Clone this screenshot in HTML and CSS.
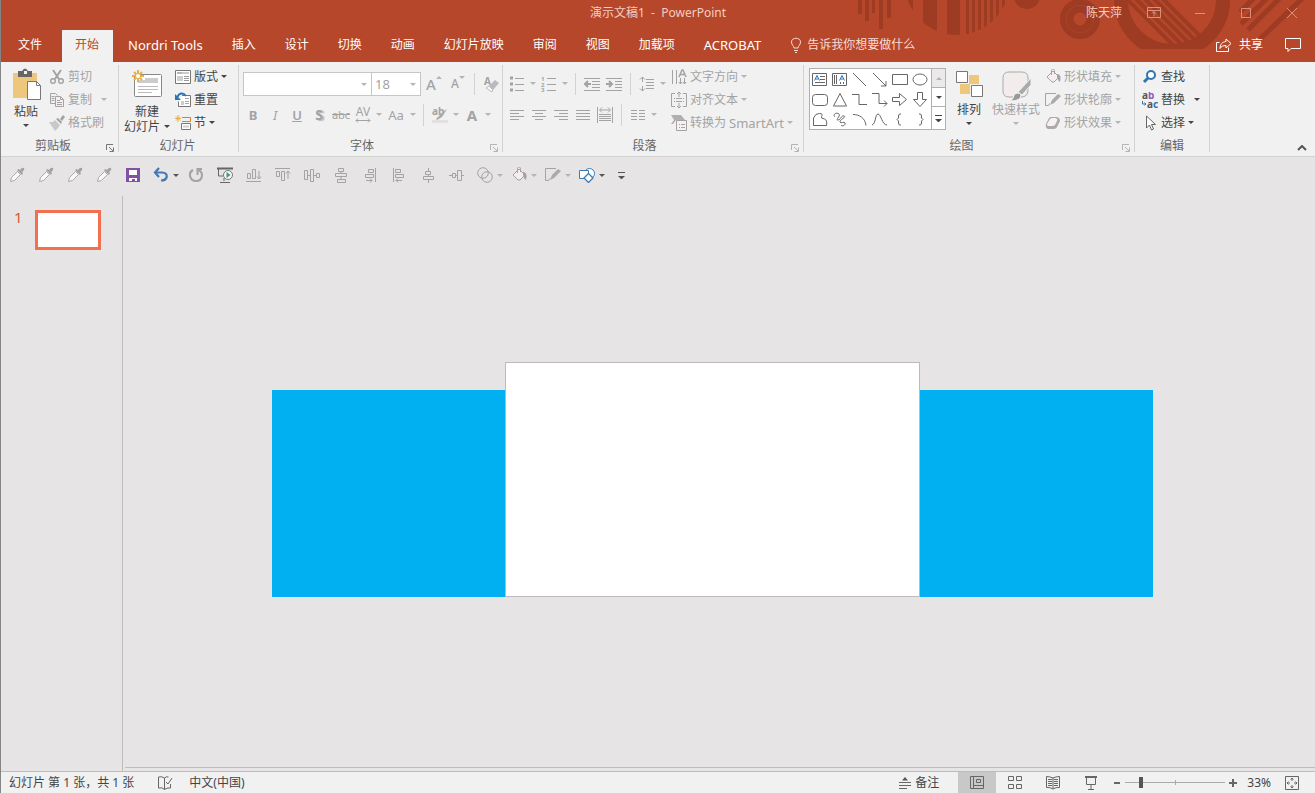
FILE: index.html
```html
<!DOCTYPE html>
<html lang="zh-CN">
  <head>
    <meta charset="UTF-8" />
    <meta name="viewport" content="width=device-width, initial-scale=1.0" />
    <title>演示文稿1 - PowerPoint</title>
    <link rel="stylesheet" href="styles.css">
  </head>
  <body>
    <!-- 图标定义 -->
    <svg class="defs" aria-hidden="true">
      <symbol id="i-cut" viewBox="0 0 16 16"><path d="M4 1l6 9M12 1L6 10" fill="none" stroke="currentColor" stroke-width="2"/><circle cx="4" cy="12" r="2.3" fill="none" stroke="currentColor" stroke-width="1.4"/><circle cx="12" cy="12" r="2.3" fill="none" stroke="currentColor" stroke-width="1.4"/></symbol>
      <symbol id="i-copy" viewBox="0 0 16 16"><path d="M6.500 11.500h-5v-10h5l2 2M2.500 4.500h3M2.500 6.500h3M2.500 8.500h3" fill="none" stroke="currentColor"/><path d="M6.500 4.500h5l3 3v7h-8zM11.500 4.500v3h3M8 8.500h3M8 10.500h5M8 12.500h5" fill="#f6eeee" stroke="currentColor"/></symbol>
      <symbol id="i-brush" viewBox="0 0 16 16"><path d="M0 7l4 0 2-2 5 5-2 3-3 3z" fill="#c8c8c8"/><path d="M7 4l2-1 4 4-1 2zM11 4l3-4 2 2-3 4z" fill="currentColor"/></symbol>
      <symbol id="i-layout" viewBox="0 0 16 16"><path d="M.5 1.500h15v13h-15z" fill="#fff" stroke="#777"/><path d="M2 3h5v2H2zM2 7h6v5H2z" fill="#cfcfcf"/><path d="M2 4h12M9 7.500h5M9 9.500h5M9 11.500h5" stroke="#999"/></symbol>
      <symbol id="i-reset" viewBox="0 0 16 16"><path d="M7 3.500h8.500v11h-12v-5" fill="#fff" stroke="#777"/><path d="M6 9h3v4H6z" fill="#ccc"/><path d="M10 6.500h4M10 9.500h4M10 11.500h4" stroke="#aaa"/><path d="M2.500 5C4 1 8 0 11 4" fill="none" stroke="#2e75b6" stroke-width="2"/><path d="M0 2v6h6z" fill="#2e75b6"/></symbol>
      <symbol id="i-section" viewBox="0 0 16 16"><path d="M7 2.500h8.500v4H7" fill="none" stroke="#e08024"/><path d="M6.500 8.500h9v6h-9z" fill="#fff" stroke="#777"/><path d="M8 11.500h6" stroke="#ccc" stroke-width="2"/><path d="M3 0v7M0 3.500h6M1 1.500l4 4M5 1.500l-4 4" stroke="#e8b04c"/></symbol>
      <symbol id="i-launch" viewBox="0 0 8 8"><path d="M.5 6V.5H7M3 3l4 4M7.500 3.500v4h-4" fill="none" stroke="currentColor"/></symbol>
      <symbol id="i-bullets" viewBox="0 0 16 16"><path d="M1 2h3M1 8h3M1 14h3" stroke="currentColor" stroke-width="3"/><path d="M6 2.500h9M6 8.500h9M6 14.500h9" stroke="currentColor"/></symbol>
      <symbol id="i-outdent" viewBox="0 0 16 16"><path d="M0 2.500h16M8 5.500h8M8 8.500h8M8 11.500h8M0 14.500h16" stroke="currentColor"/><path d="M1 8h6M4 5L1 8l3 3" fill="none" stroke="currentColor" stroke-width="2"/></symbol>
      <symbol id="i-indent" viewBox="0 0 16 16"><path d="M0 2.500h16M9 5.500h7M9 8.500h7M9 11.500h7M0 14.500h16" stroke="currentColor"/><path d="M0 8h6M3 5l3 3-3 3" fill="none" stroke="currentColor" stroke-width="2"/></symbol>
      <symbol id="i-spacing" viewBox="0 0 16 16"><path d="M3.500 1v5M1 3.500L3.500 1 6 3.500M3.500 15v-5M1 12.500L3.500 15 6 12.500" fill="none" stroke="currentColor"/><path d="M7 3.500h8M7 6.500h8M7 9.500h8M7 12.500h8" stroke="currentColor"/></symbol>
      <symbol id="i-left" viewBox="0 0 16 16"><path d="M1 3.500h14M1 6.500h9M1 9.500h14M1 12.500h9" stroke="currentColor"/></symbol>
      <symbol id="i-center" viewBox="0 0 16 16"><path d="M1 3.500h14M4 6.500h8M1 9.500h14M4 12.500h8" stroke="currentColor"/></symbol>
      <symbol id="i-right" viewBox="0 0 16 16"><path d="M1 3.500h14M6 6.500h9M1 9.500h14M6 12.500h9" stroke="currentColor"/></symbol>
      <symbol id="i-justify" viewBox="0 0 16 16"><path d="M1 3.500h14M1 6.500h14M1 9.500h14M1 12.500h14" stroke="currentColor"/></symbol>
      <symbol id="i-distribute" viewBox="0 0 16 16"><path d="M.5 0v16M15.500 0v16M2 7.500h12M2 9.500h12M2 11.500h12M2 13.500h12M3 3h10M5 .5L2.500 3 5 5.500M11 .5L13.500 3 11 5.500" fill="none" stroke="currentColor"/></symbol>
      <symbol id="i-columns" viewBox="0 0 16 16"><path d="M1 3.500h6M1 6.500h6M1 9.500h6M1 12.500h6M9 3.500h6M9 6.500h6M9 9.500h6M9 12.500h6" stroke="currentColor"/></symbol>
      <symbol id="i-direction" viewBox="0 0 16 16"><path d="M1.500 1v14M5.500 1v14M9.500 9v6M13.500 9v6M8 13l1.500 2 1.500-2M12 13l1.500 2 1.500-2" fill="none" stroke="currentColor"/><path d="M8 8l3-7h1l3 7M9 5.500h5" fill="none" stroke="currentColor" stroke-width="1.500"/></symbol>
      <symbol id="i-valign" viewBox="0 0 16 16"><path d="M4 1.500H.5v13H4M12 1.500h3.500v13H12" fill="none" stroke="currentColor"/><path d="M3 6.500h1M5 6.500h6M12 6.500h1M3 9.500h1M5 9.500h6M12 9.500h1" stroke="currentColor"/><path d="M8 5V0M6 2l2-2 2 2M8 11v5M6 14l2 2 2-2" fill="none" stroke="currentColor"/></symbol>
      <symbol id="i-smartart" viewBox="0 0 16 16"><path d="M0 0h10l4 5H5L2 9H0l3-4z" fill="#b0b0b0"/><path d="M5.500 5.500h10v10h-10z" fill="#f6f0f0" stroke="currentColor"/><path d="M8 9.500h1M10 9.500h4M8 12.500h1M10 12.500h4" stroke="currentColor"/></symbol>
      <symbol id="i-bucket" viewBox="0 0 16 16"><path d="M2 8l6-6 6 6-5 5-2 0z" fill="#f6eeee" stroke="currentColor"/><path d="M6.500 6V1.500c0-2 3-2 3 0V5" fill="none" stroke="currentColor"/><path d="M12 5c4 0 4 4 3 8-2-1-2-3-3-5z" fill="currentColor"/></symbol>
      <symbol id="i-outline" viewBox="0 0 16 16"><path d="M11 1.500H.5v12h3l1-2" fill="none" stroke="currentColor"/><path d="M5 13l2-5 6-6 3 2-7 7z" fill="#aaa"/></symbol>
      <symbol id="i-effect" viewBox="0 0 16 16"><path d="M1 9l3-6q1-1 2-1h6q3 1 3 4l-3 6q-1 2-3 2H3q-3-1-2-5z" fill="#aaa"/><path d="M2 9l3-5q1-1 2-1h4q2 1 1 3l-2 4q-1 1-2 1H3q-1 0-1-2z" fill="#f6f0f0"/></symbol>
      <symbol id="i-find" viewBox="0 0 16 16"><circle cx="9" cy="6" r="4" fill="#fff" stroke="#2e75b6" stroke-width="2"/><path d="M6 9l-4 4" stroke="#2e75b6" stroke-width="3"/></symbol>
      <symbol id="i-select" viewBox="0 0 16 16"><path d="M4.500 1v12l3-3 2 5 2-1-2-4.500h4z" fill="#fff" stroke="#666"/></symbol>
      <symbol id="i-dropper" viewBox="0 0 16 16"><path d="M1.500 14.500l1-4 6-6 3 3-6 6z" fill="#f8f8f8" stroke="#aaa"/><path d="M8 3l5 5 1-2-1-1q3-2 2-4-2-1-4 2L9.500 2z" fill="#a3a3a3"/></symbol>
      <symbol id="i-save" viewBox="0 0 16 16"><path d="M1 1h14v14H1z" fill="#8450a5"/><path d="M4 3h8v5H4zM4 11h8v3h-2v-2H7v2H4z" fill="#fff"/></symbol>
      <symbol id="i-undo" viewBox="0 0 16 16"><path d="M2 5.500h7c7 0 6 8-1 8" fill="none" stroke="#3f7ab5" stroke-width="2.200"/><path d="M6 1L2 5.500 6 10" fill="none" stroke="#3f7ab5" stroke-width="2.200"/></symbol>
      <symbol id="i-redo" viewBox="0 0 16 16"><path d="M5 3C-.5 6 2 14 8 14c7 0 8-9 2-11" fill="none" stroke="currentColor" stroke-width="2"/><path d="M9.500 8V2H14" fill="none" stroke="currentColor" stroke-width="2"/></symbol>
      <symbol id="i-play" viewBox="0 0 16 16"><path d="M0 1.500h16" stroke="#666" stroke-width="2"/><path d="M1.500 2v7H6M3 15.500h10M7 11v3" fill="none" stroke="#666"/><circle cx="11" cy="8" r="4.500" fill="#f5f5f5" stroke="#777"/><path d="M9.500 5l4 3-4 3z" fill="#3f9b78"/></symbol>
      <symbol id="i-al-bottom" viewBox="0 0 16 16"><path d="M0 14.500h15M1.500 6.500h3v5h-3zM6.500 2.500h3v9h-3zM13 4v8M11 9.500l2 2.500 2-2.500" fill="none" stroke="currentColor"/></symbol>
      <symbol id="i-al-top" viewBox="0 0 16 16"><path d="M0 1.500h15M1.500 4.500h3v5h-3zM6.500 4.500h3v9h-3zM13 4v8M11 6.500L13 4l2 2.500" fill="none" stroke="currentColor"/></symbol>
      <symbol id="i-dist-h" viewBox="0 0 16 16"><path d="M.5 3.500h3v9h-3zM6.500 2.500h3v12h-3zM12.500 6.500h3v4h-3zM4 8.500h2M10 8.500h2" fill="none" stroke="currentColor"/></symbol>
      <symbol id="i-dist-v" viewBox="0 0 16 16"><path d="M5.500 1.500h5v3h-5zM2.500 6.500h11v3h-11zM4.500 12.500h8v3h-8zM8 4v2M8 10v2" fill="none" stroke="currentColor"/></symbol>
      <symbol id="i-al-right" viewBox="0 0 16 16"><path d="M13.500 1v14M6.500 2.500h5v3h-5zM3.500 7.500h8v3h-8zM4 13.500h6M8 11.500l2 2-2 2" fill="none" stroke="currentColor"/></symbol>
      <symbol id="i-al-left" viewBox="0 0 16 16"><path d="M2.500 1v14M4.500 2.500h5v3h-5zM4.500 7.500h8v3h-8zM5 13.500h6M7 11.500l-2 2 2 2" fill="none" stroke="currentColor"/></symbol>
      <symbol id="i-al-mid" viewBox="0 0 16 16"><path d="M5.500 4.500h5v3h-5zM3.500 9.500h10v3h-10zM8.500 1v3M8.500 13v3M8.500 8v1" fill="none" stroke="currentColor"/></symbol>
      <symbol id="i-al-cen" viewBox="0 0 16 16"><path d="M3.500 6.500h3v4h-3zM8.500 3.500h4v10h-4zM0 8.500h3M7 8.500h1M13 8.500h2" fill="none" stroke="currentColor"/></symbol>
      <symbol id="i-merge" viewBox="0 0 16 16"><circle cx="6" cy="6" r="5.300" fill="none" stroke="currentColor"/><circle cx="10" cy="10" r="5.300" fill="none" stroke="currentColor"/></symbol>
      <symbol id="i-shapes" viewBox="0 0 16 16"><circle cx="10.500" cy="6.500" r="5" fill="#fff" stroke="#3f7ab5"/><path d="M.5 3.500h9v8h-9z" fill="#fff" stroke="#3f7ab5"/><path d="M9.500 6.500l4.500 4.500-4.500 4.500L5 11z" fill="#fff" stroke="#3f7ab5" stroke-width="1.300"/></symbol>
    </svg>

    <header class="header">
      <svg class="pattern" viewBox="0 0 475 62" aria-hidden="true">
        <defs>
          <clipPath id="c1"><circle cx="117" cy="-17" r="52"/></clipPath>
          <clipPath id="c2"><circle cx="332" cy="0" r="46"/></clipPath>
          <clipPath id="c3"><path d="M240 0h175v49H240z"/></clipPath>
        </defs>
        <path d="M18 0h4v14h-4zM25 0h4v21h-4zM32 0h3v13h-3zM39 0h4v29h-4zM47 0h4v18h-4z"/>
        <path clip-path="url(#c1)" d="M66 0h7v40h-7zM83 0h14v40H83zM107 0h13v40h-13zM126 0h3v40h-3zM132 0h3v40h-3zM138 0h3v40h-3zM144 0h3v40h-3zM150 0h3v40h-3zM156 0h3v40h-3zM162 0h3v40h-3z"/>
        <circle cx="187" cy="-4" r="13"/>
        <g class="rings">
          <circle cx="240" cy="19" r="17" stroke-width="6"/>
          <circle cx="240" cy="19" r="10" stroke-width="7"/>
          <circle cx="332" cy="0" r="51" stroke-width="14" clip-path="url(#c3)"/>
          <path clip-path="url(#c2)" stroke-width="4" d="M272-16l70 70M281-16l70 70M290-16l70 70M299-16l70 70M308-16l70 70"/>
          <path stroke-width="5" d="M424-12l-24 24M437-12l-36 36M450-12l-42 42M468-7l-48 46"/>
        </g>
      </svg>

      <div class="titlebar">
        <h1>演示文稿1 &nbsp;-&nbsp; PowerPoint</h1>
        <div class="window-tools">
          <span class="user">陈天萍</span>
          <button aria-label="功能区显示选项"><svg viewBox="0 0 14 12"><path d="M.5.5h13v10H.5zM1 3.500h12M7 9.500v-5M5 6.500l2-2 2 2"/></svg></button>
          <button aria-label="最小化"><svg viewBox="0 0 14 12"><path d="M2 6.500h10"/></svg></button>
          <button aria-label="最大化"><svg viewBox="0 0 14 12"><path d="M2.500 1.500h9v9h-9z"/></svg></button>
          <button aria-label="关闭"><svg viewBox="0 0 14 12"><path d="M2 1l10 10M12 1L2 11"/></svg></button>
        </div>
      </div>

      <nav class="tabs">
        <a class="file" href="#">文件</a>
        <a class="active" href="#">开始</a>
        <a class="latin" href="#">Nordri Tools</a>
        <a href="#">插入</a>
        <a href="#">设计</a>
        <a href="#">切换</a>
        <a href="#">动画</a>
        <a href="#">幻灯片放映</a>
        <a href="#">审阅</a>
        <a href="#">视图</a>
        <a href="#">加载项</a>
        <a class="latin" href="#">ACROBAT</a>
        <a class="tell" href="#"><svg class="bulb" viewBox="0 0 12 16"><path d="M4 11c0-2-2.500-3-2.500-6 0-5 9-5 9 0 0 3-2.500 4-2.500 6zM4 13.500h4M5 15.500h2"/></svg>告诉我你想要做什么</a>
        <div class="share">
          <a href="#"><svg viewBox="0 0 16 16"><path d="M3.500 5.500h-3v9h12v-4M10 2l5 4.500-5 4.500V8.500c-3 0-5 1-6 3 0-4 2-6.500 6-7z"/></svg>共享</a>
          <button aria-label="批注"><svg viewBox="0 0 16 16"><path d="M.5 1.500h15v10H6l-3 3v-3H.5z"/></svg></button>
        </div>
      </nav>
    </header>

    <section class="ribbon">
      <!-- 剪贴板 -->
      <div class="group clipboard">
        <div class="tools">
          <button class="big">
            <svg viewBox="0 0 30 34"><path d="M2 5h24v25H2z" fill="#eec77c"/><path d="M7 3h4q3-5 6 0h4v6H7z" fill="#666"/><path d="M13 3h3v3h-3z" fill="#f1f1f1"/><path d="M16.500 13.500h9l4 4v14h-13z" fill="#fff" stroke="#777"/><path d="M25.500 13.500v4h4" fill="none" stroke="#777"/></svg>
            <span>粘贴</span><i class="caret"></i>
          </button>
          <div class="rows off">
            <button><svg><use href="#i-cut"/></svg>剪切</button>
            <button><svg><use href="#i-copy"/></svg>复制 <i class="caret far"></i></button>
            <button><svg><use href="#i-brush"/></svg>格式刷</button>
          </div>
        </div>
        <div class="name">剪贴板</div>
        <button class="launch" aria-label="剪贴板选项"><svg><use href="#i-launch"/></svg></button>
      </div>

      <!-- 幻灯片 -->
      <div class="group slides">
        <div class="tools">
          <button class="big">
            <svg viewBox="0 0 30 34"><path d="M3.500 6.500h25q1 0 1 1v20q0 1-1 1h-25q-1 0-1-1v-20q0-1 1-1z" fill="#fff" stroke="#888"/><path d="M13 10h13v5H6v-3h7z" fill="#ccc"/><path d="M6 18.500h20M6 21.500h20M6 24.500h14" stroke="#bbb"/><path d="M6 2v12M0 8h12M2 4l8 8M10 4l-8 8" stroke="#e8b04c" stroke-width="2"/><circle cx="6" cy="8" r="2" fill="#fff"/></svg>
            <span>新建</span><span>幻灯片 <i class="caret"></i></span>
          </button>
          <div class="rows">
            <button><svg><use href="#i-layout"/></svg>版式 <i class="caret"></i></button>
            <button><svg><use href="#i-reset"/></svg>重置</button>
            <button><svg><use href="#i-section"/></svg>节 <i class="caret"></i></button>
          </div>
        </div>
        <div class="name">幻灯片</div>
      </div>

      <!-- 字体 -->
      <div class="group font">
        <div class="lines off">
          <div class="line">
            <label class="combo family"><select aria-label="字体"><option></option></select><i class="caret"></i></label>
            <label class="combo size"><select aria-label="字号"><option>18</option></select><i class="caret"></i></label>
            <button class="grow" aria-label="增大字号"><span>A</span><i class="caret up"></i></button>
            <button class="shrink" aria-label="减小字号"><span>A</span><i class="caret"></i></button>
            <span class="sep"></span>
            <button aria-label="清除格式"><svg viewBox="0 0 16 16"><text x="1" y="9" font-size="10" font-weight="700" fill="currentColor">A</text><path d="M6 10l6-6 4 3-6 7z" fill="#bbb"/><path d="M3 12l3-2 4 4-1 2z" fill="#f8f8f8" stroke="#bbb"/></svg></button>
          </div>
          <div class="line">
            <button><b>B</b></button>
            <button><em>I</em></button>
            <button><u>U</u></button>
            <button><b class="shadow">S</b></button>
            <button><s>abc</s></button>
            <button class="spacing"><span>AV</span><svg viewBox="0 0 16 5"><path d="M1 2.500h14M3 .5l-2 2 2 2M13 .5l2 2-2 2" fill="none" stroke="currentColor"/></svg></button>
            <i class="caret"></i>
            <button class="case">Aa</button>
            <i class="caret"></i>
            <span class="sep"></span>
            <button aria-label="突出显示"><svg viewBox="0 0 16 16"><text x="0" y="8" font-size="10" font-weight="700" fill="currentColor">ab</text><path d="M4 12l8-8 3-2-5 8-5 3z" fill="#aaa"/><path d="M0 13h16v3H0z" fill="#e4e0e2"/></svg></button>
            <i class="caret"></i>
            <button><b class="color">A</b></button>
            <i class="caret"></i>
          </div>
        </div>
        <div class="name">字体</div>
        <button class="launch off" aria-label="字体选项"><svg><use href="#i-launch"/></svg></button>
      </div>

      <!-- 段落 -->
      <div class="group paragraph">
        <div class="tools">
          <div class="lines off">
            <div class="line">
              <button aria-label="项目符号"><svg><use href="#i-bullets"/></svg></button><i class="caret"></i>
              <button aria-label="编号"><svg viewBox="0 0 16 16"><g font-size="6" font-weight="700" fill="currentColor"><text x="0" y="5">1</text><text x="0" y="11">2</text><text x="0" y="16">3</text></g><path d="M6 2.500h9M6 8.500h9M6 14.500h9" stroke="currentColor"/></svg></button><i class="caret"></i>
              <span class="sep"></span>
              <button aria-label="减少缩进"><svg><use href="#i-outdent"/></svg></button>
              <button aria-label="增加缩进"><svg><use href="#i-indent"/></svg></button>
              <span class="sep"></span>
              <button aria-label="行距"><svg><use href="#i-spacing"/></svg></button><i class="caret"></i>
            </div>
            <div class="line">
              <button aria-label="左对齐"><svg><use href="#i-left"/></svg></button>
              <button aria-label="居中"><svg><use href="#i-center"/></svg></button>
              <button aria-label="右对齐"><svg><use href="#i-right"/></svg></button>
              <button aria-label="两端对齐"><svg><use href="#i-justify"/></svg></button>
              <button aria-label="分散对齐"><svg><use href="#i-distribute"/></svg></button>
              <span class="sep"></span>
              <button aria-label="分栏"><svg><use href="#i-columns"/></svg></button><i class="caret"></i>
            </div>
          </div>
          <div class="rows off">
            <button><svg><use href="#i-direction"/></svg>文字方向 <i class="caret"></i></button>
            <button><svg><use href="#i-valign"/></svg>对齐文本 <i class="caret"></i></button>
            <button><svg><use href="#i-smartart"/></svg>转换为 <span class="latin">SmartArt</span> <i class="caret"></i></button>
          </div>
        </div>
        <div class="name">段落</div>
        <button class="launch off" aria-label="段落选项"><svg><use href="#i-launch"/></svg></button>
      </div>

      <!-- 绘图 -->
      <div class="group drawing">
        <div class="tools">
          <div class="gallery">
            <div class="shapes">
              <button aria-label="文本框"><svg><path d="M1.500 2.500h14v12h-14zM9 5.500h5M9 8.500h5M4 11.500h10"/><path class="blue" d="M3.500 9.500l2.500-5 2.500 5M4.500 8h3"/></svg></button>
              <button aria-label="竖排文本框"><svg><path d="M1.500 2.500h14v12h-14zM3.500 4v9M5.500 4v9M9.500 11v2M12.500 11v2"/><path class="blue" d="M8.500 9.500l2.500-5 2.500 5M9.500 8h3"/></svg></button>
              <button aria-label="直线"><svg><path d="M2 2l13 13"/></svg></button>
              <button aria-label="箭头"><svg><path d="M2 2l13 13M15 10v5h-5"/></svg></button>
              <button aria-label="矩形"><svg><path d="M1.500 3.500h15v10h-15z"/></svg></button>
              <button aria-label="椭圆"><svg><ellipse cx="9" cy="8.500" rx="7" ry="5.500"/></svg></button>
              <button aria-label="圆角矩形"><svg><rect x="1.500" y="3.500" width="15" height="11" rx="3"/></svg></button>
              <button aria-label="三角形"><svg><path d="M9 2.500L15.500 15h-13z"/></svg></button>
              <button aria-label="肘形连接符"><svg><path d="M1 3.500h7v10h8"/></svg></button>
              <button aria-label="肘形箭头"><svg><path d="M1 2.500h7v10h8M13 9.500l3 3-3 3"/></svg></button>
              <button aria-label="右箭头"><svg><path d="M1.500 6.500h7v-4l7 6-7 6v-4h-7z"/></svg></button>
              <button aria-label="下箭头"><svg><path d="M6.500 1.500h5v7h4l-6.500 7-6.500-7h4z"/></svg></button>
              <button aria-label="任意多边形"><svg><path d="M2.500 14.500V7q2-5 6-4.500 4 0 2 3-1 2 3 2.500 3 1 2 6.500z"/></svg></button>
              <button aria-label="自由曲线"><svg><path d="M4 6c-3-3 2-5 4-3s-4 6-1 6 3-5 6-4-5 4-4 6 4-1 5 1-3 4-4 2"/></svg></button>
              <button aria-label="弧形"><svg><path d="M2 3.500c6 0 12 3 13 11"/></svg></button>
              <button aria-label="曲线"><svg><path d="M1 14c4-1 3-11 6-11s4 11 9 11"/></svg></button>
              <button aria-label="左大括号"><svg><path d="M10 3H9q-1.500 0-1.500 2v2L6 8.500 7.500 10v2q0 2 1.500 2h1"/></svg></button>
              <button aria-label="右大括号"><svg><path d="M8 3h1q1.500 0 1.500 2v2L12 8.500 10.500 10v2q0 2-1.500 2H8"/></svg></button>
            </div>
            <div class="scroller">
              <button class="off" aria-label="上一行"><i class="caret up"></i></button>
              <button aria-label="下一行"><i class="caret"></i></button>
              <button aria-label="更多形状"><i class="caret more"></i></button>
            </div>
          </div>
          <button class="big">
            <svg viewBox="0 0 30 34"><path d="M15 7h10v9H15zM6 16h10v10H6z" fill="#eec77c"/><path d="M2.500 3.500h11v11h-11zM17.500 17.500h11v11h-11z" fill="#fff" stroke="#777"/></svg>
            <span>排列</span><i class="caret"></i>
          </button>
          <button class="big off">
            <svg viewBox="0 0 30 34"><path d="M8 4h13q6 0 6 6v12q0 7-7 7H8q-6 0-6-6V10q0-6 6-6z" fill="#f3ecec" stroke="#aaa"/><path d="M30 10v7l-9 10-4-3z" fill="#aaa" stroke="#f1f1f1"/><path d="M9 33q4-2 4-6 4-4 7 0 0 6-11 6z" fill="#999" stroke="#f1f1f1"/></svg>
            <span>快速样式</span><i class="caret"></i>
          </button>
          <div class="rows off">
            <button><svg><use href="#i-bucket"/></svg>形状填充 <i class="caret"></i></button>
            <button><svg><use href="#i-outline"/></svg>形状轮廓 <i class="caret"></i></button>
            <button><svg><use href="#i-effect"/></svg>形状效果 <i class="caret"></i></button>
          </div>
        </div>
        <div class="name">绘图</div>
        <button class="launch off" aria-label="绘图选项"><svg><use href="#i-launch"/></svg></button>
      </div>

      <!-- 编辑 -->
      <div class="group editing">
        <div class="tools">
          <div class="rows">
            <button><svg><use href="#i-find"/></svg>查找</button>
            <button><svg viewBox="0 0 16 16"><g font-size="10" font-weight="700"><text x="0" y="7" fill="#555">a<tspan fill="#8e5bb5">b</tspan></text><text x="5" y="16" fill="#555">a<tspan fill="#2e75b6">c</tspan></text></g><path d="M.5 9v3H4M2.500 10.500L4 12l-1.500 1.500" fill="none" stroke="#2e75b6"/></svg>替换 <i class="caret far"></i></button>
            <button><svg><use href="#i-select"/></svg>选择 <i class="caret"></i></button>
          </div>
        </div>
        <div class="name">编辑</div>
      </div>

      <button class="collapse" aria-label="折叠功能区"><svg viewBox="0 0 10 6"><path d="M1 5l4-4 4 4" fill="none" stroke="#555" stroke-width="2"/></svg></button>
    </section>

    <!-- 快速访问工具栏 -->
    <div class="quickbar off">
      <button aria-label="取色器 1"><svg><use href="#i-dropper"/></svg></button>
      <button aria-label="取色器 2"><svg><use href="#i-dropper"/></svg></button>
      <button aria-label="取色器 3"><svg><use href="#i-dropper"/></svg></button>
      <button aria-label="取色器 4"><svg><use href="#i-dropper"/></svg></button>
      <button aria-label="保存"><svg><use href="#i-save"/></svg></button>
      <button class="split on" aria-label="撤消"><svg><use href="#i-undo"/></svg><i class="caret"></i></button>
      <button aria-label="重复"><svg><use href="#i-redo"/></svg></button>
      <button aria-label="从头开始放映"><svg><use href="#i-play"/></svg></button>
      <button aria-label="底端对齐"><svg><use href="#i-al-bottom"/></svg></button>
      <button aria-label="顶端对齐"><svg><use href="#i-al-top"/></svg></button>
      <button aria-label="横向分布"><svg><use href="#i-dist-h"/></svg></button>
      <button aria-label="纵向分布"><svg><use href="#i-dist-v"/></svg></button>
      <button aria-label="右对齐"><svg><use href="#i-al-right"/></svg></button>
      <button aria-label="左对齐"><svg><use href="#i-al-left"/></svg></button>
      <button aria-label="水平居中"><svg><use href="#i-al-mid"/></svg></button>
      <button aria-label="垂直居中"><svg><use href="#i-al-cen"/></svg></button>
      <button class="split" aria-label="合并形状"><svg><use href="#i-merge"/></svg><i class="caret"></i></button>
      <button class="split" aria-label="形状填充"><svg><use href="#i-bucket"/></svg><i class="caret"></i></button>
      <button class="split" aria-label="形状轮廓"><svg><use href="#i-outline"/></svg><i class="caret"></i></button>
      <button class="split on" aria-label="形状"><svg><use href="#i-shapes"/></svg><i class="caret"></i></button>
      <button class="on" aria-label="自定义快速访问工具栏"><i class="caret more"></i></button>
    </div>

    <main class="workspace">
      <aside class="thumbs">
        <span class="num">1</span>
        <a class="thumb" href="#" aria-label="幻灯片 1"></a>
      </aside>
      <div class="canvas">
        <div class="stage">
          <div class="block"></div>
          <div class="slide"></div>
          <div class="block"></div>
        </div>
      </div>
    </main>

    <footer class="status">
      <span>幻灯片 第 1 张，共 1 张</span>
      <button class="spell" aria-label="拼写检查"><svg viewBox="0 0 16 16"><path d="M7.500 14.500V3q-3-2-6-1v11q4-1 6 1.500 2-2 6-1.500V9M7.500 3q2-2 4-1M9 7l2 2 4-6"/></svg></button>
      <button class="lang">中文(中国)</button>
      <div class="views">
        <button class="notes"><svg viewBox="0 0 12 12"><path d="M0 5.500h12M0 8.500h12M0 11.500h8"/><path class="fill" d="M6 0l3 3.500H3z"/></svg>备注</button>
        <button class="view active" aria-label="普通视图"><svg viewBox="0 0 16 16"><path d="M1.500 1.500h13v12h-13zM4.500 2v11M5 10.500h9M7.500 4.500h4v3h-4z"/></svg></button>
        <button class="view" aria-label="幻灯片浏览"><svg viewBox="0 0 16 16"><path d="M1.500 1.500h5v4h-5zM9.500 1.500h5v4h-5zM1.500 9.500h5v4h-5zM9.500 9.500h5v4h-5z"/></svg></button>
        <button class="view" aria-label="阅读视图"><svg viewBox="0 0 16 16"><path d="M8 14V3Q5 1.500 1.500 1.500v11Q5 12 8 14q3-2 6.500-1.500v-11Q11 1.500 8 3M3 4.500h4M3 6.500h4M3 8.500h4M3 10.500h4M9 4.500h4M9 6.500h4M9 8.500h4M9 10.500h4"/></svg></button>
        <button class="view" aria-label="幻灯片放映"><svg viewBox="0 0 16 16"><path d="M2 2h12" stroke-width="2"/><path d="M3.500 3v6.500h9V3M8 10v4M5 14.500h6"/></svg></button>
        <button class="zoom-btn" aria-label="缩小"><svg viewBox="0 0 8 8"><path d="M1 4h6" stroke-width="2"/></svg></button>
        <input class="zoom" type="range" min="0" max="100" value="14" aria-label="缩放">
        <button class="zoom-btn" aria-label="放大"><svg viewBox="0 0 8 8"><path d="M0 4h8M4 0v8" stroke-width="2"/></svg></button>
        <button class="percent">33%</button>
        <button class="fit" aria-label="适应窗口"><svg viewBox="0 0 14 14"><path d="M.5.5h13v13H.5zM7 2v3M5.500 3.500L7 2l1.500 1.500M7 12V9M5.500 10.500L7 12l1.500-1.500M2 7h3M3.500 5.500L2 7l1.500 1.500M12 7H9M10.500 5.500L12 7l-1.500 1.500"/></svg></button>
      </div>
    </footer>
  </body>
</html>
```

FILE: styles.css
```css
/* 全局样式 */
* {
  box-sizing: border-box;
}

body {
  margin: 0;
  min-height: 100vh;
  display: flex;
  flex-direction: column;
  border-left: 1px solid #858585;
  background: #e6e4e5;
  color: #444;
  font-family: "Noto Sans", "Noto Sans CJK SC", sans-serif;
  font-size: 12px;
  line-height: 16px;
}

button,
select {
  margin: 0;
  padding: 0;
  border: 0;
  background: none;
  color: inherit;
  font: inherit;
}

a {
  color: inherit;
  text-decoration: none;
}

svg {
  display: block;
  flex: none;
  width: 16px;
  height: 16px;
}

.defs {
  position: absolute;
  width: 0;
  height: 0;
}

.latin {
  font-size: 13px;
}

.off {
  color: #a3a3a3;
}

.on {
  color: #555;
}

/* 下拉小三角 */
.caret {
  flex: none;
  width: 0;
  height: 0;
  border: 3px solid transparent;
  border-top-color: currentColor;
  border-bottom: 0;
}

.off .caret {
  color: #b4b4b4;
}

.caret.up {
  border-top: 0;
  border-bottom: 3px solid currentColor;
}

.caret.more {
  width: 7px;
  height: 7px;
  border: 0;
  background: linear-gradient(currentColor, currentColor) 0 0 / 7px 1px no-repeat;
}

.caret.more::after {
  content: "";
  display: block;
  margin-top: 4px;
  border: 3px solid transparent;
  border-top-color: currentColor;
  border-bottom: 0;
}

.off .on .caret {
  color: #555;
}

/* 标题栏 */
.header {
  position: relative;
  background: #b7472a;
  color: #fff;
  overflow: hidden;
}

.pattern {
  position: absolute;
  top: 0;
  right: 0;
  width: 475px;
  height: 62px;
  fill: #9e3b23;
}

.rings {
  fill: none;
  stroke: #9e3b23;
}

.titlebar {
  position: relative;
  display: grid;
  grid-template-columns: 1fr auto 1fr;
  align-items: center;
  height: 26px;
  color: #f3cdc2;
}

.titlebar h1 {
  grid-column: 2;
  margin: 0;
  font-size: 12px;
  font-weight: 400;
}

.window-tools {
  display: flex;
  justify-content: flex-end;
  align-items: center;
}

.user {
  margin-right: 9px;
}

.window-tools button {
  display: flex;
  justify-content: center;
  width: 46px;
}

.window-tools svg {
  width: 14px;
  height: 12px;
  fill: none;
  stroke: #d8917f;
}

.tabs {
  position: relative;
  display: flex;
  gap: 1px;
  height: 36px;
  padding-top: 4px;
}

.tabs a {
  display: flex;
  align-items: center;
  padding: 0 14px 3px;
  white-space: nowrap;
}

.tabs .file {
  padding-left: 17px;
  padding-right: 19px;
}

.tabs .active {
  padding-left: 13px;
  background: #f1f1f1;
  color: #b7472a;
}

.tabs svg {
  fill: none;
  stroke: currentColor;
}

.tabs .tell {
  gap: 5px;
  color: #f6dcd5;
}

.tabs .bulb {
  width: 12px;
}

.share {
  display: flex;
  align-items: center;
  gap: 8px;
  margin-left: auto;
  padding-right: 14px;
}

.share a {
  gap: 7px;
  padding-bottom: 3px;
}

.share button {
  padding-bottom: 3px;
}

/* 功能区 */
.ribbon {
  display: flex;
  padding: 3px 0 4px;
  background: #f1f1f1;
  border-bottom: 1px solid #d2d2d2;
}

.group {
  position: relative;
  display: flex;
  flex-direction: column;
  height: 87px;
  border-right: 1px solid #d2d2d2;
  white-space: nowrap;
}

.clipboard {
  min-width: 118px;
  padding-left: 7px;
}

.slides {
  min-width: 120px;
  padding-left: 5px;
}

.font {
  min-width: 262px;
  padding-left: 3px;
}

.paragraph {
  min-width: 301px;
  padding-left: 3px;
}

.drawing {
  min-width: 331px;
  padding-left: 5px;
}

.editing {
  min-width: 75px;
  padding-left: 7px;
}

.tools {
  display: flex;
  flex: 1;
  gap: 5px;
}

.paragraph .tools {
  gap: 3px;
}

.name {
  height: 16px;
  margin-top: auto;
  margin-bottom: -2px;
  padding-right: 20px;
  text-align: center;
  color: #666;
}

.slides .name,
.editing .name {
  padding-right: 7px;
}

.launch {
  position: absolute;
  right: 4px;
  bottom: 0;
  color: #777;
}

.launch.off {
  color: #b4b4b4;
}

.launch svg {
  width: 8px;
  height: 8px;
}

.big {
  display: flex;
  flex-direction: column;
  align-items: center;
  align-self: flex-start;
  min-width: 36px;
  line-height: 15px;
}

.big svg {
  width: 30px;
  height: 34px;
  margin: 3px 0 2px;
}

.drawing .big svg {
  margin-bottom: 0;
}

.big .caret {
  margin-top: 5px;
}

.big span {
  display: flex;
  align-items: center;
  gap: 4px;
}

.big span .caret {
  margin-top: 0;
}

.rows {
  display: grid;
  grid-auto-rows: 23px;
  align-content: start;
  justify-items: start;
}

.rows button {
  display: flex;
  align-items: center;
  gap: 3px;
}

.rows .far {
  margin-left: 6px;
}

.lines {
  display: flex;
  flex-direction: column;
  gap: 8px;
  padding-top: 7px;
}

.line {
  display: flex;
  align-items: center;
  height: 23px;
}

.line button {
  display: flex;
  align-items: center;
  justify-content: center;
  width: 22px;
  height: 22px;
}

.line .caret {
  margin: 0 2px;
}

.sep {
  width: 1px;
  height: 22px;
  margin: 0 5px;
  background: #d2d2d2;
}

/* 字体组 */
.combo {
  position: relative;
  display: flex;
  height: 24px;
  border: 1px solid #c6c6c6;
  background: #fff;
}

.combo select {
  width: 100%;
  padding-left: 3px;
  appearance: none;
  font-size: 13px;
}

.combo .caret {
  position: absolute;
  top: 10px;
  right: 2px;
}

.combo.family {
  width: 129px;
  margin-left: 1px;
}

.combo.size {
  width: 49px;
  border-left: 0;
}

.line .grow,
.line .shrink {
  align-items: flex-start;
  font-size: 15px;
  font-weight: 500;
  line-height: 22px;
}

.line .grow {
  width: 26px;
}

.line .shrink {
  font-size: 12px;
}

.line .grow .caret,
.line .shrink .caret {
  margin: 3px 0 0;
}

.line b,
.line em,
.line u {
  font-size: 13px;
}

.line u {
  font-weight: 600;
}

.line .shadow {
  font-size: 14px;
  text-shadow: 2px 1px 1px #bbb;
}

.line s {
  font-size: 11px;
}

.line .spacing {
  flex-direction: column;
  line-height: 12px;
}

.spacing svg {
  height: 5px;
}

.line .case {
  width: 24px;
  font-size: 13px;
}

.line .color {
  font-size: 15px;
}

/* 形状库 */
.gallery {
  display: flex;
  align-self: flex-start;
  margin-top: 3px;
  border: 1px solid #b0b0b0;
  background: #fff;
}

.shapes {
  display: grid;
  grid-template-columns: repeat(6, 20px);
  grid-auto-rows: 20px;
  padding-right: 1px;
}

.shapes button {
  display: grid;
  place-items: center;
}

.shapes svg {
  width: 18px;
  height: 17px;
  fill: none;
  stroke: #666;
}

.shapes .blue {
  stroke: #2e75b6;
}

.scroller {
  display: grid;
  width: 14px;
  border-left: 1px solid #b0b0b0;
}

.scroller button {
  display: grid;
  place-items: center;
}

.scroller button + button {
  border-top: 1px solid #b0b0b0;
}

.scroller .off {
  background: #ebe9ea;
}

.collapse {
  align-self: flex-end;
  margin-left: auto;
  padding: 0 8px 1px 0;
}

.collapse svg {
  width: 10px;
  height: 6px;
}

/* 快速访问工具栏 */
.quickbar {
  display: flex;
  align-items: center;
  height: 39px;
  padding: 0 0 3px 1px;
}

.quickbar button {
  display: flex;
  align-items: center;
  justify-content: center;
  width: 29px;
  height: 24px;
}

.quickbar .split {
  gap: 4px;
  width: 34px;
  padding-left: 4px;
}

/* 工作区 */
.workspace {
  display: flex;
  flex: 1;
}

.thumbs {
  display: flex;
  gap: 12px;
  width: 122px;
  padding: 14px 0 0 13px;
  border-right: 1px solid #bdbdbd;
}

.num {
  color: #d6583a;
  font-size: 15px;
  line-height: 14px;
}

.thumb {
  width: 66px;
  height: 40px;
  border: 3px solid #f2704f;
  background: #fff;
}

.canvas {
  display: flex;
  flex: 1;
  align-items: center;
  justify-content: center;
  margin: 0 0 3px 2px;
  padding: 0 15px 4px 0;
  border-bottom: 1px solid #bdbdbd;
}

.stage {
  display: grid;
  grid-template-columns: 233fr 414fr 233fr;
  align-items: end;
  width: 75%;
}

.block {
  aspect-ratio: 233 / 207;
  background: #00b0f0;
}

.slide {
  aspect-ratio: 414 / 235;
  border: 1px solid #bbb;
  background: #fff;
}

/* 状态栏 */
.status {
  display: flex;
  align-items: center;
  height: 22px;
  padding-left: 8px;
  border-top: 1px solid #bdbdbd;
  background: #f1f1f1;
  white-space: nowrap;
}

.status svg {
  fill: none;
  stroke: #666;
}

.status .fill {
  fill: #555;
  stroke: none;
}

.spell {
  margin: 0 16px 0 23px;
}

.views {
  display: flex;
  align-items: center;
  align-self: stretch;
  margin-left: auto;
  padding-right: 16px;
}

.notes {
  display: flex;
  align-items: center;
  gap: 4px;
  margin-right: 19px;
}

.notes svg {
  width: 12px;
  height: 12px;
}

.view {
  display: grid;
  place-items: center;
  align-self: stretch;
  width: 38px;
}

.view.active {
  background: #c8c8c8;
}

.zoom-btn svg {
  width: 8px;
  height: 8px;
}

.zoom-btn {
  padding: 0 3px;
}

.zoom {
  width: 100px;
  height: 12px;
  margin: 0 1px;
  appearance: none;
  background:
    linear-gradient(#aaa, #aaa) 50% 50% / 1px 5px no-repeat,
    linear-gradient(#aaa, #aaa) 0 50% / 100% 1px no-repeat;
}

.zoom::-webkit-slider-thumb {
  appearance: none;
  width: 4px;
  height: 11px;
  background: #555;
}

.percent {
  margin: 0 14px 0 7px;
}

.fit svg {
  width: 14px;
  height: 14px;
}
```
